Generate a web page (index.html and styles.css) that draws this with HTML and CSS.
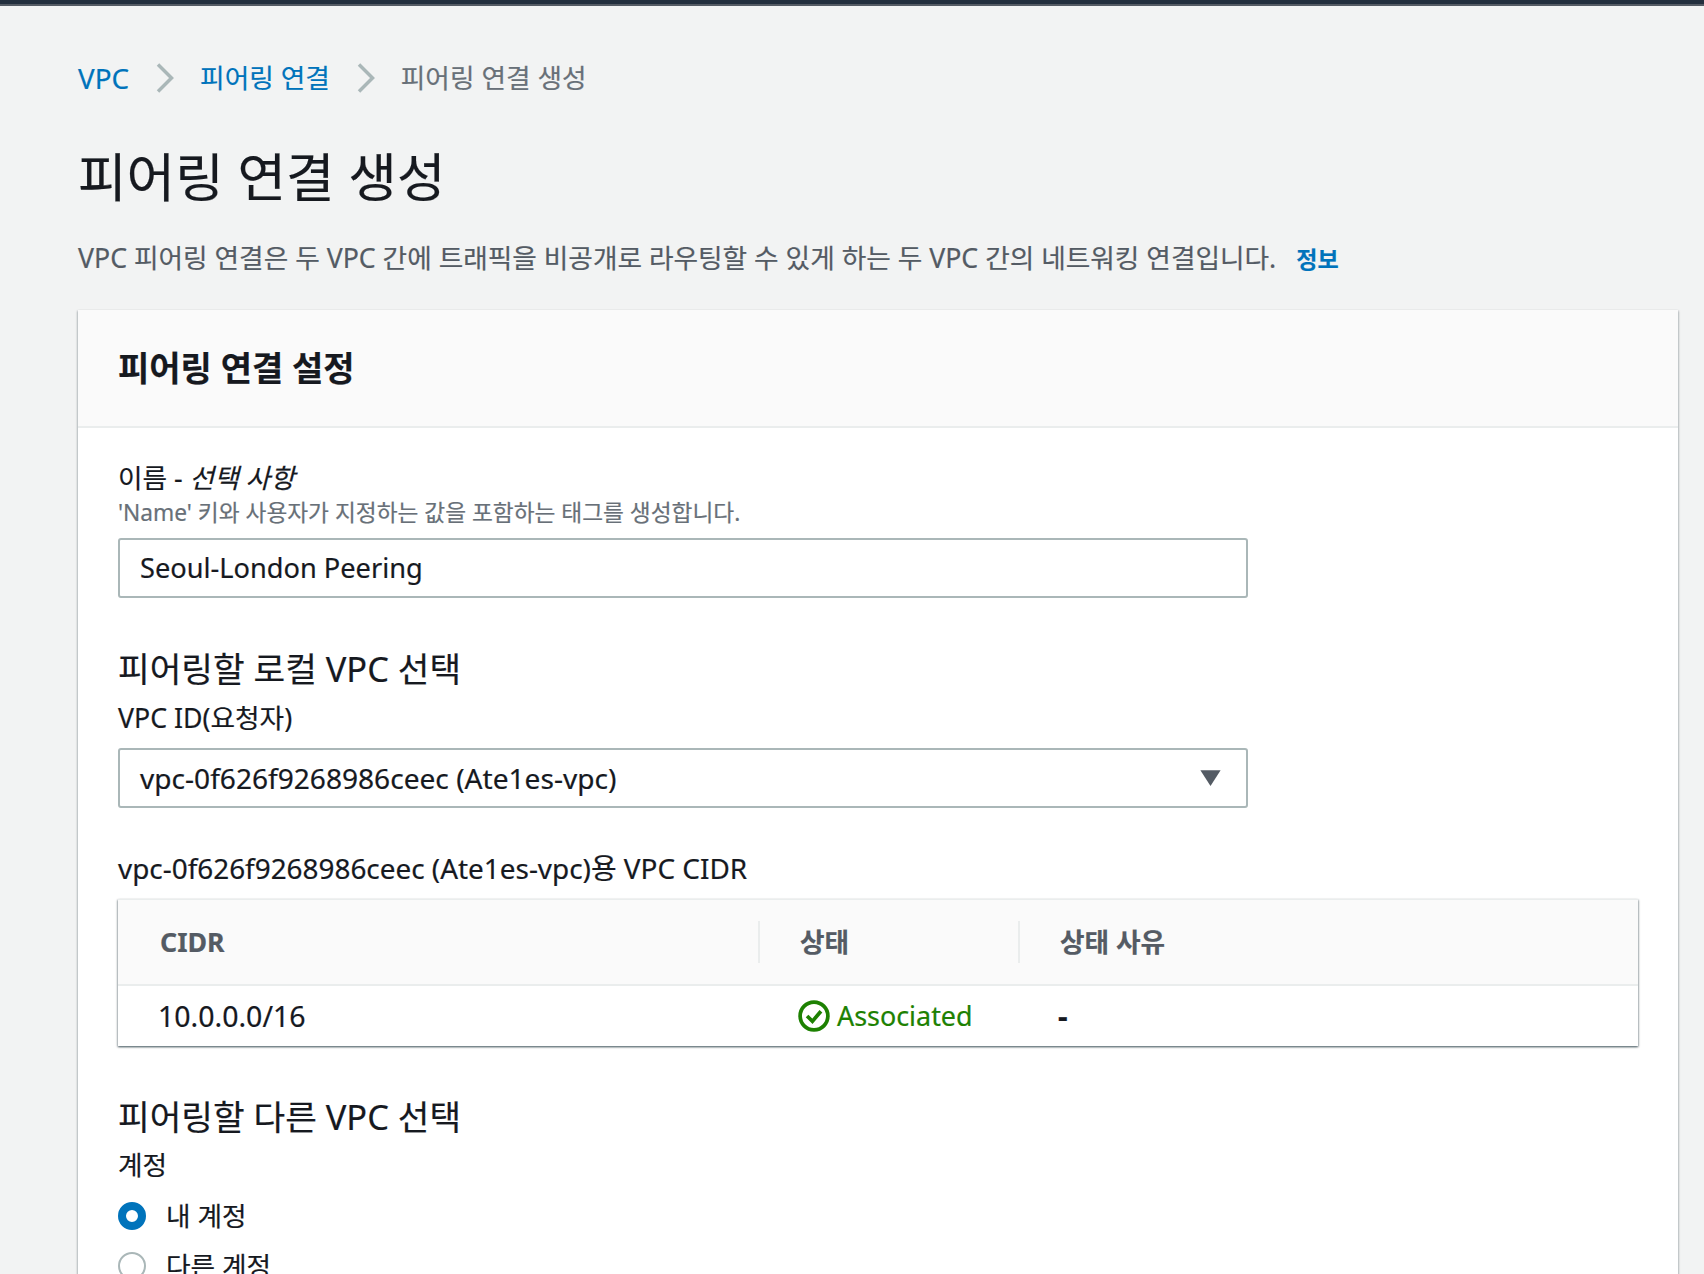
FILE: index.html
```html
<!DOCTYPE html>
<html lang="ko">
<head>
<meta charset="utf-8">
<title>피어링 연결 생성</title>
<link rel="stylesheet" href="styles.css">
</head>
<body>
<div class="topbar"></div>
<main class="page">
  <nav class="crumbs">
    <a class="link crumb-vpc">VPC</a>
    <svg class="chev" viewBox="0 0 18 30"><path d="M2 1.5 15.5 15 2 28.5"/></svg>
    <a class="link">피어링 연결</a>
    <svg class="chev" viewBox="0 0 18 30"><path d="M2 1.5 15.5 15 2 28.5"/></svg>
    <span class="crumb-current">피어링 연결 생성</span>
  </nav>
  <h1 class="title">피어링 연결 생성</h1>
  <p class="intro">VPC 피어링 연결은 두 VPC 간에 트래픽을 비공개로 라우팅할 수 있게 하는 두 VPC 간의 네트워킹 연결입니다.<a class="info">정보</a></p>
  <section class="card">
    <header class="card-head"><h2>피어링 연결 설정</h2></header>
    <div class="card-body">
      <div class="label">이름 - <i>선택 사항</i></div>
      <div class="hint">'Name' 키와 사용자가 지정하는 값을 포함하는 태그를 생성합니다.</div>
      <div class="field">Seoul-London Peering</div>
      <h3 class="sub sub-local">피어링할 로컬 VPC 선택</h3>
      <div class="label label-vpc">VPC ID(요청자)</div>
      <div class="field field-select">vpc-0f626f9268986ceec (Ate1es-vpc)
        <svg class="caret" viewBox="0 0 20 16"><path d="M1 1h18L10 15z"/></svg>
      </div>
      <div class="label label-cidr">vpc-0f626f9268986ceec (Ate1es-vpc)용 VPC CIDR</div>
      <div class="table">
        <div class="thead">
          <div class="th th-first">CIDR</div>
          <div class="th">상태</div>
          <div class="th">상태 사유</div>
        </div>
        <div class="tbody">
          <div class="td td-first">10.0.0.0/16</div>
          <div class="td status">
            <svg class="ok" viewBox="0 0 30 30"><circle cx="15" cy="15" r="13"/><path d="M8.5 15l5 5 8-9.5"/></svg>
            Associated
          </div>
          <div class="td td-dash">-</div>
        </div>
      </div>
      <h3 class="sub sub-other">피어링할 다른 VPC 선택</h3>
      <div class="label label-acct">계정</div>
      <div class="radio"><span class="dot dot-on"></span>내 계정</div>
      <div class="radio"><span class="dot"></span>다른 계정</div>
    </div>
  </section>
</main>
</body>
</html>
```

FILE: styles.css
```css
* { box-sizing: border-box; }
html, body { margin: 0; height: 1274px; overflow: hidden; }
body {
  background: #f2f3f3;
  color: #16191f;
  font-family: "Noto Sans", "Noto Sans CJK KR", sans-serif;
  font-size: 26.7px;
  line-height: 36px;
  -webkit-text-stroke: 0.2px currentColor;
}
.topbar { height: 6px; background: #232f3e; border-bottom: 2px solid #545b64; }
.page { padding: 54px 26px 0 78px; }
.crumbs { display: flex; align-items: center; height: 36px; }
.link { color: #0073bb; }
.crumb-vpc { font-size: 27.8px; }
.chev { width: 18px; height: 30px; margin: 0 26px 0 27px; fill: none; stroke: #aab7b8; stroke-width: 3.5; }
.crumb-current { color: #687078; }
.title { margin: 46px 0 0; font-size: 52.8px; line-height: 70px; font-weight: 400; }
.intro { margin: 28px 0 0; color: #545b64; height: 36px; }
.info { margin-left: 20px; color: #0073bb; font-weight: 700; font-size: 23px; }
.card { margin-top: 34px; background: #fff; box-shadow: 0 1px 2px rgba(0,28,36,.3), 1px 1px 2px rgba(0,28,36,.15), -1px 1px 2px rgba(0,28,36,.15); }
.card-head { height: 118px; padding: 0 40px; display: flex; align-items: center; background: #fafafa; border-bottom: 2px solid #eaeded; }
.card-head h2 { margin: 0; font-size: 34px; font-weight: 700; line-height: 44px; }
.card-body { padding: 32px 40px 60px; }
.label { line-height: 36px; }
.hint { color: #687078; font-size: 22.7px; line-height: 33px; }
.field { display: flex; align-items: center; justify-content: space-between; height: 60px; width: 1130px; margin-top: 9px; padding: 0 20px; background: #fff; border: 2px solid #aab7b8; border-radius: 3px; font-size: 27.2px; }
.field-select { margin-top: 12px; font-size: 28.1px; }
.caret { width: 23px; height: 18px; margin-right: 4px; fill: #545b64; }
.sub { margin: 0; font-size: 34.4px; line-height: 48px; font-weight: 400; }
.sub-local { margin-top: 47px; }
.label-vpc { margin-top: 7px; }
.label-cidr { margin-top: 42px; font-size: 27.9px; }
.table { width: 1520px; margin-top: 13px; box-shadow: 0 1px 2px rgba(0,28,36,.6), 1px 1px 2px rgba(0,28,36,.15), -1px 1px 2px rgba(0,28,36,.15); border-top: 1px solid #eaeded; }
.thead, .tbody { display: grid; grid-template-columns: 640px 260px 1fr; }
.thead { height: 86px; background: #fafafa; border-bottom: 2px solid #eaeded; align-items: center; }
.th { height: 42px; line-height: 42px; padding-left: 40px; color: #545b64; font-weight: 700; }
.th-first { padding-left: 42px; }
.th + .th { border-left: 2px solid #eaeded; }
.tbody { height: 60px; align-items: center; }
.td { padding-left: 40px; }
.td-first { font-size: 28.5px; }
.td-dash { font-weight: 700; font-size: 30px; }
.status { display: flex; align-items: center; gap: 7px; color: #1d8102; font-size: 26.9px; }
.ok { width: 32px; height: 32px; fill: none; stroke: #1d8102; stroke-width: 3.5; }
.sub-other { margin-top: 47px; }
.label-acct { margin-top: 6px; margin-bottom: 8px; }
.radio { display: flex; align-items: center; gap: 20px; height: 50px; }
.dot { width: 28px; height: 28px; border-radius: 50%; border: 2px solid #aab7b8; background: #fff; }
.dot-on { border: 8px solid #0073bb; }
```
